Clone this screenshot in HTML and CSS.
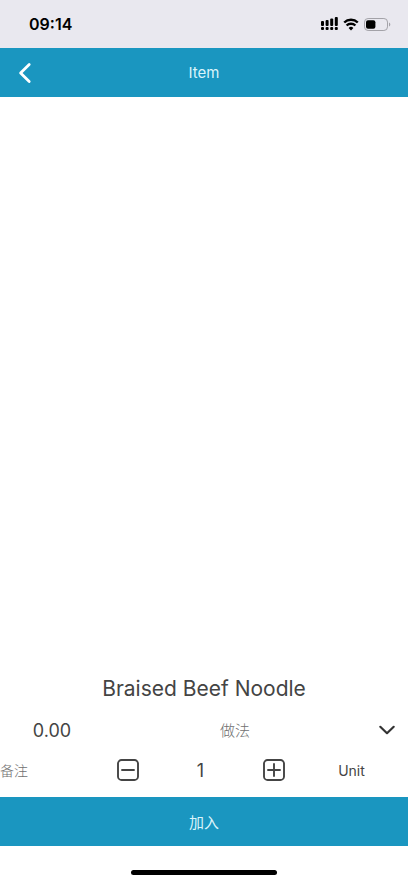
FILE: index.html
```html
<!DOCTYPE html>
<html lang="zh">
<head>
<meta charset="utf-8">
<meta name="viewport" content="width=device-width, initial-scale=1">
<title>Item</title>
<link rel="stylesheet" href="styles.css">
</head>
<body>
<div class="screen">
  <div class="status">
    <span class="time">09:14</span>
    <div class="indicators">
      <svg width="17" height="14" viewBox="0 0 17 14" aria-hidden="true">
        <g fill="#000">
          <rect x="0" y="4" width="3" height="5" rx="1"/>
          <rect x="4.6" y="3" width="3" height="6" rx="1"/>
          <rect x="9.2" y="1.5" width="3" height="7.5" rx="1"/>
          <rect x="13.8" y="0" width="3" height="9" rx="1"/>
          <rect x="0" y="10" width="3" height="3" rx="1"/>
          <rect x="4.6" y="10" width="3" height="3" rx="1"/>
          <rect x="9.2" y="10" width="3" height="3" rx="1"/>
          <rect x="13.8" y="10" width="3" height="3" rx="1"/>
        </g>
      </svg>
      <svg width="16" height="13" viewBox="0 0 16 13" aria-hidden="true">
        <path d="M1.2 4.5a9.8 9.8 0 0 1 13.6 0M3.6 7.5a6.3 6.3 0 0 1 8.8 0" fill="none" stroke="#000" stroke-width="2.4"/>
        <path d="M8 12.6 5.6 10a3.4 3.4 0 0 1 4.8 0z" fill="#000"/>
      </svg>
      <svg width="27" height="13" viewBox="0 0 27 13" aria-hidden="true">
        <rect x=".5" y=".5" width="23" height="12" rx="3.6" fill="none" stroke="#a3a2a8"/>
        <path d="M25 4.5c1.8.6 1.8 3.4 0 4z" fill="#a3a2a8"/>
        <rect x="2" y="2.2" width="9.4" height="8.6" rx="2" fill="#000"/>
      </svg>
    </div>
  </div>
  <header class="bar">
    <button class="back" type="button" aria-label="Back">
      <svg width="14" height="22" viewBox="0 0 14 22" aria-hidden="true"><path d="M11.2 2.6 2.6 11l8.6 8.4" fill="none" stroke="#fff" stroke-width="2.8" stroke-linecap="round" stroke-linejoin="round"/></svg>
    </button>
    <h1 class="heading">Item</h1>
  </header>
  <main class="photo"></main>
  <form class="order">
    <h2 class="name">Braised Beef Noodle</h2>
    <div class="row options">
      <span class="price">0.00</span>
      <select class="method" aria-label="做法"><option>做法</option></select>
      <svg class="arrow" width="18" height="12" viewBox="0 0 18 12" aria-hidden="true"><path d="M2.3 2.8 9 9.2l6.7-6.4" fill="none" stroke="#333" stroke-width="2.2" stroke-linecap="round" stroke-linejoin="round"/></svg>
    </div>
    <div class="row amount">
      <input class="note" type="text" placeholder="备注" aria-label="备注">
      <button class="step" type="button" aria-label="Decrease">
        <svg width="24" height="24" viewBox="0 0 24 24" aria-hidden="true"><g fill="none" stroke="#444" stroke-width="1.9" stroke-linecap="round"><rect x="2" y="2" width="20" height="20" rx="3.6"/><path d="M6 12h12"/></g></svg>
      </button>
      <input class="count" type="text" inputmode="numeric" value="1" aria-label="Quantity">
      <button class="step" type="button" aria-label="Increase">
        <svg width="24" height="24" viewBox="0 0 24 24" aria-hidden="true"><g fill="none" stroke="#444" stroke-width="1.9" stroke-linecap="round"><rect x="2" y="2" width="20" height="20" rx="3.6"/><path d="M6 12h12M12 6v12"/></g></svg>
      </button>
      <span class="unit">Unit</span>
    </div>
    <button class="add" type="button">加入</button>
  </form>
  <div class="home"><div class="handle"></div></div>
</div>
</body>
</html>
```
FILE: styles.css
```css
* { box-sizing: border-box; }

body {
  margin: 0;
  background: #fff;
  color: #444;
  font-family: Inter, "Noto Sans CJK SC", sans-serif;
}

button, input, select {
  margin: 0;
  padding: 0;
  border: 0;
  border-radius: 0;
  background: none;
  color: inherit;
  font: inherit;
  appearance: none;
}

svg { display: block; }

.screen {
  display: flex;
  flex-direction: column;
  min-height: 100vh;
}

.status {
  display: flex;
  align-items: center;
  justify-content: space-between;
  height: 48px;
  padding: 0 17px 0 29px;
  background: #e9e8ef;
  color: #000;
}

.time {
  font-size: 16px;
  font-weight: 600;
}

.indicators {
  display: flex;
  align-items: center;
  gap: 5px;
}

.bar {
  display: grid;
  grid-template-columns: 50px 1fr 50px;
  align-items: center;
  height: 49px;
  background: #1a96c0;
}

.back {
  display: flex;
  align-items: center;
  justify-content: center;
  height: 49px;
}

.heading {
  margin: 0;
  color: #d9f4fb;
  font-size: 15px;
  font-weight: 400;
  text-align: center;
}

.photo { flex: 1; }

.name {
  margin: 0;
  font-size: 21px;
  font-weight: 400;
  line-height: 42px;
  text-align: center;
}

.row {
  display: grid;
  align-items: center;
  height: 40px;
}

.options { grid-template-columns: 104fr 262fr 42fr; }

.price {
  font-size: 18px;
  text-align: center;
}

.method {
  grid-area: 1 / 2 / 2 / 4;
  height: 40px;
  padding-right: 42px;
  color: #707070;
  font-size: 15px;
  font-weight: 300;
  text-align: center;
  text-align-last: center;
}

.arrow {
  grid-area: 1 / 3;
  justify-self: center;
  pointer-events: none;
}

.amount {
  grid-template-columns: 91fr 73fr 73fr 73fr 83fr 15fr;
  margin-bottom: 7px;
}

.amount > * { min-width: 0; }

.note {
  font-size: 14px;
  font-weight: 300;
}

.note::placeholder {
  color: #707070;
  opacity: 1;
}

.step {
  display: flex;
  align-items: center;
  justify-content: center;
  height: 40px;
}

.count {
  font-size: 18px;
  text-align: center;
}

.unit {
  font-size: 14px;
  text-align: center;
}

.add {
  display: block;
  width: 100%;
  height: 49px;
  background: #1a96c0;
  color: #d9f4fb;
  font-size: 15px;
}

.home {
  display: flex;
  justify-content: center;
  height: 37px;
  padding-top: 24px;
}

.handle {
  width: 36%;
  height: 5px;
  border-radius: 3px;
  background: #000;
}
```
